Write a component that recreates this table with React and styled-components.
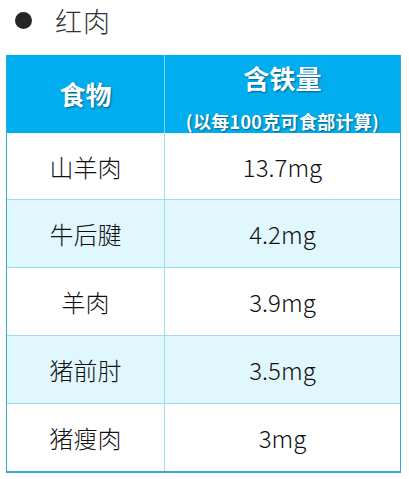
import React from "react";
import styled, { createGlobalStyle } from "styled-components";

const Global = createGlobalStyle`
  html, body { margin: 0; padding: 0; background: #fff; }
  body { font-family: "Noto Sans CJK SC", "Noto Sans", sans-serif; }
`;

const Page = styled.div`
  padding: 0 8px 0 6px;
  width: 395px;
`;

const Heading = styled.div`
  display: flex;
  align-items: center;
  height: 40px;
  padding-left: 9px;
  gap: 23px;
  margin-bottom: 15px;
`;

const Dot = styled.span`
  width: 17px;
  height: 17px;
  border-radius: 50%;
  background: #262626;
`;

const HeadingText = styled.span`
  font-size: 27px;
  font-weight: 300;
  color: #333;
  letter-spacing: 1px;
`;

const Table = styled.div`
  display: grid;
  grid-template-columns: 157px 1fr;
  border: 1px solid #38a9d2;
  border-top: none;
  border-bottom-width: 2px;
`;

const HeadCell = styled.div`
  background: #00aeef;
  color: #fff;
  font-weight: 700;
  text-shadow: 1px 1px 2px rgba(0, 0, 0, 0.45);
  height: 78px;
  box-sizing: border-box;
  padding-top: ${(p) => (p.$first ? 0 : 8)}px;
  display: flex;
  flex-direction: column;
  align-items: center;
  justify-content: ${(p) => (p.$first ? "center" : "flex-start")};
  border-left: ${(p) => (p.$first ? "none" : "1px solid #7fd3f3")};
`;

const HeadMain = styled.div`
  font-size: 26px;
  line-height: 30px;
`;

const HeadSub = styled.div`
  font-size: 18px;
  line-height: 22px;
  margin-top: 17px;
  letter-spacing: 0.3px;
`;

const Cell = styled.div`
  height: ${(p) => (p.$first ? 66 : 67)}px;
  display: flex;
  align-items: center;
  justify-content: center;
  background: ${(p) => (p.$alt ? "#e1f7fe" : "#fff")};
  border-top: ${(p) => (p.$first ? "none" : "1px solid #9edcf2")};
  border-left: ${(p) => (p.$col ? "1px solid #9edcf2" : "none")};
  font-size: 24px;
  color: #111;
  font-weight: 300;
`;

const rows = [
  ["山羊肉", "13.7mg"],
  ["牛后腱", "4.2mg"],
  ["羊肉", "3.9mg"],
  ["猪前肘", "3.5mg"],
  ["猪瘦肉", "3mg"],
];

export default function App() {
  return (
    <Page>
      <Global />
      <Heading>
        <Dot />
        <HeadingText>红肉</HeadingText>
      </Heading>
      <Table>
        <HeadCell $first>
          <HeadMain>食物</HeadMain>
        </HeadCell>
        <HeadCell>
          <HeadMain>含铁量</HeadMain>
          <HeadSub>(以每100克可食部计算)</HeadSub>
        </HeadCell>
        {rows.map(([food, iron], i) => (
          <React.Fragment key={food}>
            <Cell $alt={i % 2 === 1} $first={i === 0}>{food}</Cell>
            <Cell $alt={i % 2 === 1} $first={i === 0} $col>{iron}</Cell>
          </React.Fragment>
        ))}
      </Table>
    </Page>
  );
}
